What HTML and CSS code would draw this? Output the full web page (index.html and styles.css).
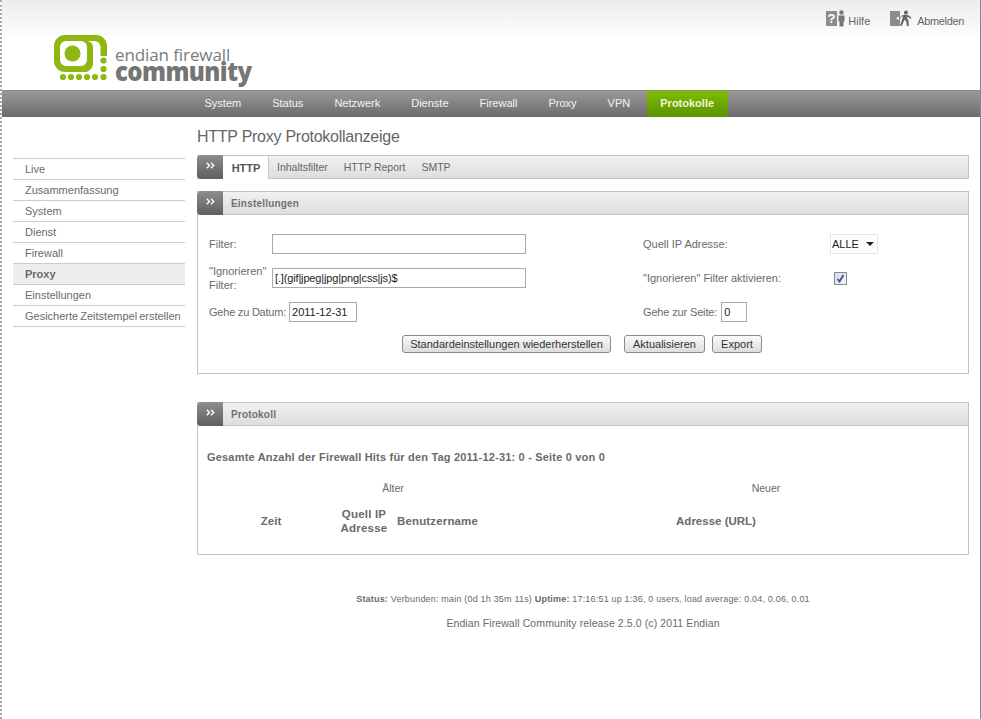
FILE: index.html
```html
<!DOCTYPE html>
<html lang="de">
<head>
<meta charset="utf-8">
<title>HTTP Proxy Protokollanzeige</title>
<link rel="stylesheet" href="styles.css">
</head>
<body>
<div class="page">
  <header class="header">
    <a class="logo">
      <svg class="logo-mark" width="54" height="47" viewBox="54 35 54 47">
        <path d="M87 72H65a11 11 0 0 1-11-11V46a11 11 0 0 1 11-11h31a11 11 0 0 1 11 11v10h-6.500V47a6 6 0 0 0-6-6H87a6 6 0 0 1 6 6v14a11 11 0 0 1-6 11zM66 41a6 6 0 0 0-6 6v13a6 6 0 0 0 6 6h15a6 6 0 0 0 6-6V47a6 6 0 0 0-6-6z" fill="#8fb711" fill-rule="evenodd"/>
        <circle cx="72.500" cy="53.500" r="8" fill="#8fb711"/>
        <g fill="#8fb711">
          <circle cx="63" cy="77" r="3.100"/><circle cx="71" cy="77" r="3.100"/><circle cx="79" cy="77" r="3.100"/><circle cx="87" cy="77" r="3.100"/><circle cx="95" cy="77" r="3.100"/><circle cx="103.500" cy="77" r="3.100"/><circle cx="103.500" cy="69" r="3.100"/><circle cx="103.500" cy="60.500" r="3.100"/>
        </g>
      </svg>
      <span class="logo-text">
        <span class="logo-top">endian firewall</span>
        <span class="logo-bottom">community</span>
      </span>
    </a>
    <div class="toplinks">
      <a class="toplink">
        <svg width="20" height="17" viewBox="0 0 20 17">
          <rect x="0" y="1" width="11" height="15" fill="#8c8c8c"/>
          <text x="5.500" y="13" class="qmark" text-anchor="middle">?</text>
          <circle cx="15.500" cy="2.500" r="2.200" fill="#777"/>
          <path d="M12.500 5.500h6v6h-1v5h-4v-5h-1z" fill="#777"/>
        </svg>
        <span>Hilfe</span>
      </a>
      <a class="toplink exit">
        <svg width="24" height="17" viewBox="0 0 24 17">
          <rect x="0" y="1" width="10" height="15" fill="#8c8c8c"/>
          <path d="M9 6.500v3.500L6 8.200z" fill="#fff"/>
          <circle cx="16" cy="2.500" r="2" fill="#666"/>
          <path d="M12 5.500l3-1 4 1 2.500 2.500-1 .8-2.500-1.800-1.500.3 2 3 .3 5.700h-2l-.5-4.700-2-1.500-2.300 6h-2l2.500-7.500.5-2-1.800.5-1.200 2-1-.5z" fill="#666"/>
        </svg>
        <span>Abmelden</span>
      </a>
    </div>
  </header>

  <nav class="mainnav">
    <a>System</a><a>Status</a><a>Netzwerk</a><a>Dienste</a><a>Firewall</a><a>Proxy</a><a>VPN</a><a class="active">Protokolle</a>
  </nav>

  <div class="body">
    <aside class="sidebar">
      <a>Live</a>
      <a>Zusammenfassung</a>
      <a>System</a>
      <a>Dienst</a>
      <a>Firewall</a>
      <a class="current">Proxy</a>
      <a>Einstellungen</a>
      <a>Gesicherte Zeitstempel erstellen</a>
    </aside>

    <main class="content">
      <h1>HTTP Proxy Protokollanzeige</h1>

      <div class="bar tabs">
        <span class="chev"><svg width="9" height="7" viewBox="0 0 9 7"><path d="M.8.8 3.500 3.500.8 6.200M5 .8 7.700 3.500 5 6.200" fill="none" stroke="#fff" stroke-width="1.400"/></svg></span>
        <a class="tab active">HTTP</a>
        <a class="tab">Inhaltsfilter</a>
        <a class="tab">HTTP Report</a>
        <a class="tab">SMTP</a>
      </div>

      <section class="panel settings">
        <div class="bar">
          <span class="chev"><svg width="9" height="7" viewBox="0 0 9 7"><path d="M.8.8 3.500 3.500.8 6.200M5 .8 7.700 3.500 5 6.200" fill="none" stroke="#fff" stroke-width="1.400"/></svg></span>
          <span class="bar-title">Einstellungen</span>
        </div>
        <form class="panel-body form">
          <div class="row">
            <div class="col-left">
              <label class="lbl-fixed">Filter:</label>
              <input class="field wide" type="text">
            </div>
            <div class="col-right">
              <label class="lbl-right">Quell IP Adresse:</label>
              <span class="select">ALLE<i class="caret"></i></span>
            </div>
          </div>
          <div class="row">
            <div class="col-left">
              <label class="lbl-fixed two">"Ignorieren" Filter:</label>
              <input class="field wide tight" type="text" value="[.](gif|jpeg|jpg|png|css|js)$">
            </div>
            <div class="col-right">
              <label class="lbl-right">"Ignorieren" Filter aktivieren:</label>
              <span class="check"><svg width="9" height="9" viewBox="0 0 9 9"><path d="M1.500 5 3.500 7.500 7.500 1" fill="none" stroke="#3d4f8c" stroke-width="1.800"/></svg></span>
            </div>
          </div>
          <div class="row">
            <div class="col-left">
              <label class="lbl-gap lbl-date">Gehe zu Datum:</label>
              <input class="field date" type="text" value="2011-12-31">
            </div>
            <div class="col-right">
              <label class="lbl-gap lbl-page">Gehe zur Seite:</label>
              <input class="field page-no" type="text" value="0">
            </div>
          </div>
          <div class="buttons">
            <button type="button" class="btn">Standardeinstellungen wiederherstellen</button>
            <button type="button" class="btn b2">Aktualisieren</button>
            <button type="button" class="btn b3">Export</button>
          </div>
        </form>
      </section>

      <section class="panel log">
        <div class="bar">
          <span class="chev"><svg width="9" height="7" viewBox="0 0 9 7"><path d="M.8.8 3.500 3.500.8 6.200M5 .8 7.700 3.500 5 6.200" fill="none" stroke="#fff" stroke-width="1.400"/></svg></span>
          <span class="bar-title">Protokoll</span>
        </div>
        <div class="panel-body logbody">
          <p class="summary">Gesamte Anzahl der Firewall Hits für den Tag 2011-12-31: 0 - Seite 0 von 0</p>
          <div class="pager"><span>Älter</span><span>Neuer</span></div>
          <div class="loghead">
            <span>Zeit</span>
            <span class="src">Quell IP Adresse</span>
            <span class="user">Benutzername</span>
            <span>Adresse (URL)</span>
          </div>
        </div>
      </section>

      <footer class="footer">
        <p class="status"><b>Status:</b> Verbunden: main (0d 1h 35m 11s) <b>Uptime:</b> 17:16:51 up 1:36, 0 users, load average: 0.04, 0.06, 0.01</p>
        <p class="release">Endian Firewall Community release 2.5.0 (c) 2011 Endian</p>
      </footer>
    </main>
  </div>
</div>
</body>
</html>
```
FILE: styles.css
```css
* { box-sizing: border-box; }
html, body { margin: 0; padding: 0; }
body {
  font-family: "Liberation Sans", Arial, sans-serif;
  font-size: 11px;
  color: #6a6a6a;
  background: #fff;
  overflow: hidden;
}
.page {
  width: 981px;
  height: 719px;
  border-left: 2px dotted #a8a8a8;
  border-right: 1px solid #888;
  overflow: hidden;
}
.header {
  height: 90px;
  display: flex;
  justify-content: space-between;
  align-items: flex-start;
  background: linear-gradient(#ececec, #fff 40px);
}
.logo {
  display: flex;
  margin: 35px 0 0 52px;
}
.logo-mark { display: block; }
.logo-text {
  display: flex;
  flex-direction: column;
  margin-left: 7px;
  margin-top: 11px;
}
.logo-top {
  font-family: "Open Sans", sans-serif;
  font-weight: 400;
  font-size: 17px;
  line-height: 18px;
  color: #7b7b7b;
  letter-spacing: -0.1px;
}
.logo-bottom {
  font-family: "Open Sans", sans-serif;
  font-weight: 800;
  font-size: 27px;
  line-height: 24px;
  letter-spacing: -0.7px;
  color: #757575;
  margin-top: -5px;
  transform: scaleX(0.89);
  transform-origin: left center;
}
.toplinks {
  display: flex;
  gap: 20px;
  padding: 10px 16px 0 0;
}
.toplink {
  display: flex;
  align-items: flex-end;
  gap: 2px;
  color: #666;
  font-size: 11px;
  line-height: 12px;
}
.toplink.exit { gap: 3px; letter-spacing: -0.35px; }
.toplink svg { display: block; }
.qmark {
  font-family: "Liberation Sans", sans-serif;
  font-weight: 700;
  font-size: 13px;
  fill: #fff;
}
.mainnav {
  height: 27px;
  display: flex;
  padding-left: 187px;
  border-top: 1px solid #8a8a8a;
  background: linear-gradient(#999, #6b6b6b);
}
.mainnav a {
  padding: 0 15.500px;
  line-height: 25px;
  color: #f3f3f3;
  font-size: 11px;
}
.mainnav a.active {
  margin-left: 1px;
  padding: 0;
  width: 81px;
  font-weight: 700;
  color: #eef5dc;
  background: linear-gradient(#7fbd00, #5a9300);
  text-align: center;
}
.body {
  display: flex;
  align-items: flex-start;
}
.sidebar {
  width: 172px;
  margin: 41px 0 0 11px;
  border-top: 1px solid #ccc;
  flex: none;
}
.sidebar a {
  display: block;
  height: 21px;
  padding-left: 12px;
  line-height: 20px;
  border-bottom: 1px solid #ccc;
  white-space: nowrap;
  word-spacing: -1px;
}
.sidebar a.current {
  background: #eee;
  font-weight: 700;
}
.content {
  width: 772px;
  margin-left: 12px;
}
h1 {
  margin: 0;
  height: 38px;
  padding-top: 10px;
  font-size: 16px;
  line-height: 19px;
  font-weight: 400;
  letter-spacing: -0.26px;
  color: #666;
}
.bar {
  height: 24px;
  display: flex;
  align-items: stretch;
  border: 1px solid #c4c4c4;
  border-left: 0;
  background: linear-gradient(#f1f1f1, #dedede);
  font-size: 10px;
}
.chev {
  width: 26px;
  margin: -1px 0;
  flex: none;
  display: flex;
  align-items: center;
  justify-content: center;
  padding-bottom: 3px;
  background: linear-gradient(#8d8d8d, #5f5f5f);
  border-radius: 4px 0 0 4px;
}
.tab {
  padding: 0 8px;
  line-height: 23px;
  font-size: 10.500px;
  color: #666;
  white-space: nowrap;
}
.tab.active {
  width: 46px;
  padding: 0 0 0 1px;
  margin: -1px 0 -1px;
  text-align: center;
  font-weight: 700;
  font-size: 11px;
  line-height: 24px;
  color: #555;
  background: #fff;
  border-right: 1px solid #c4c4c4;
  border-top: 1px solid #c4c4c4;
}
.bar-title {
  padding-left: 8px;
  line-height: 23px;
  font-weight: 700;
  font-size: 10px;
  letter-spacing: 0.2px;
  color: #707070;
}
.panel-body {
  border: 1px solid #c4c4c4;
  border-top: 0;
}
.settings { margin-top: 12px; }
.form {
  height: 159px;
  padding: 19px 0 0 11px;
}
.row {
  display: flex;
  height: 20px;
  margin-bottom: 14px;
  align-items: center;
}
.col-left {
  width: 434px;
  display: flex;
  align-items: center;
}
.col-right {
  display: flex;
  align-items: center;
}
.lbl-fixed { width: 63px; flex: none; }
.lbl-fixed.two { line-height: 14px; width: 60px; margin-right: 3px; }
.lbl-right { width: 187px; flex: none; }
.lbl-gap {
  margin-right: 3px;
  white-space: nowrap;
  letter-spacing: -0.15px;
}
.lbl-date { letter-spacing: -0.22px; }
.lbl-page { margin-right: 4px; }
.field {
  height: 20px;
  border: 1px solid #aaa;
  padding: 0 2px;
  font: 11px "Liberation Sans", Arial, sans-serif;
  color: #222;
  background: #fff;
  outline: 0;
}
.tight { letter-spacing: -0.15px; }
.wide { width: 254px; }
.date { width: 68px; }
.page-no { width: 26px; }
.select {
  display: flex;
  align-items: center;
  width: 48px;
  height: 20px;
  padding-left: 1px;
  border: 1px solid #e3e3e3;
  color: #222;
  font-size: 11px;
}
.caret {
  margin-left: 7px;
  border: 4px solid transparent;
  border-top: 4px solid #222;
  border-bottom: 0;
}
.check {
  width: 13px;
  height: 13px;
  margin-left: 4px;
  border: 1px solid #8a8a8a;
  display: flex;
  align-items: center;
  justify-content: center;
  background: linear-gradient(135deg, #d5d8e8, #f4f4f8);
}
.buttons {
  display: flex;
  margin: -1px 0 0 193px;
}
.btn {
  height: 18px;
  width: 209px;
  padding: 0;
  border: 1px solid #8a8a8a;
  border-radius: 3px;
  background: linear-gradient(#fafafa, #ddd);
  font: 11px "Liberation Sans", Arial, sans-serif;
  color: #333;
}
.b2 { width: 81px; margin-left: 13px; }
.b3 { width: 50px; margin-left: 7px; }
.log { margin-top: 28px; }
.logbody {
  height: 129px;
  padding: 24px 0 0 9px;
}
.summary {
  margin: 0;
  font-weight: 700;
  font-size: 11px;
  line-height: 14px;
  letter-spacing: 0.19px;
}
.pager {
  display: grid;
  grid-template-columns: 372px 374px;
  margin-top: 17px;
  line-height: 14px;
  font-size: 10.500px;
  text-align: center;
}
.loghead {
  display: grid;
  grid-template-columns: 128px 58px 85px 476px;
  align-items: center;
  margin-top: 12px;
  font-weight: 700;
  font-size: 11.500px;
  line-height: 14px;
  text-align: center;
}
.loghead .user { text-align: left; padding-left: 4px; letter-spacing: 0.15px; }
.loghead .src { letter-spacing: 0.2px; }
.footer { text-align: center; padding-top: 38px; }
.footer p { margin: 0; }
.status { font-size: 9px; line-height: 12px; letter-spacing: 0.19px; }
.release { font-size: 10.500px; line-height: 14px; letter-spacing: 0.1px; margin-top: 11px !important; }
```
